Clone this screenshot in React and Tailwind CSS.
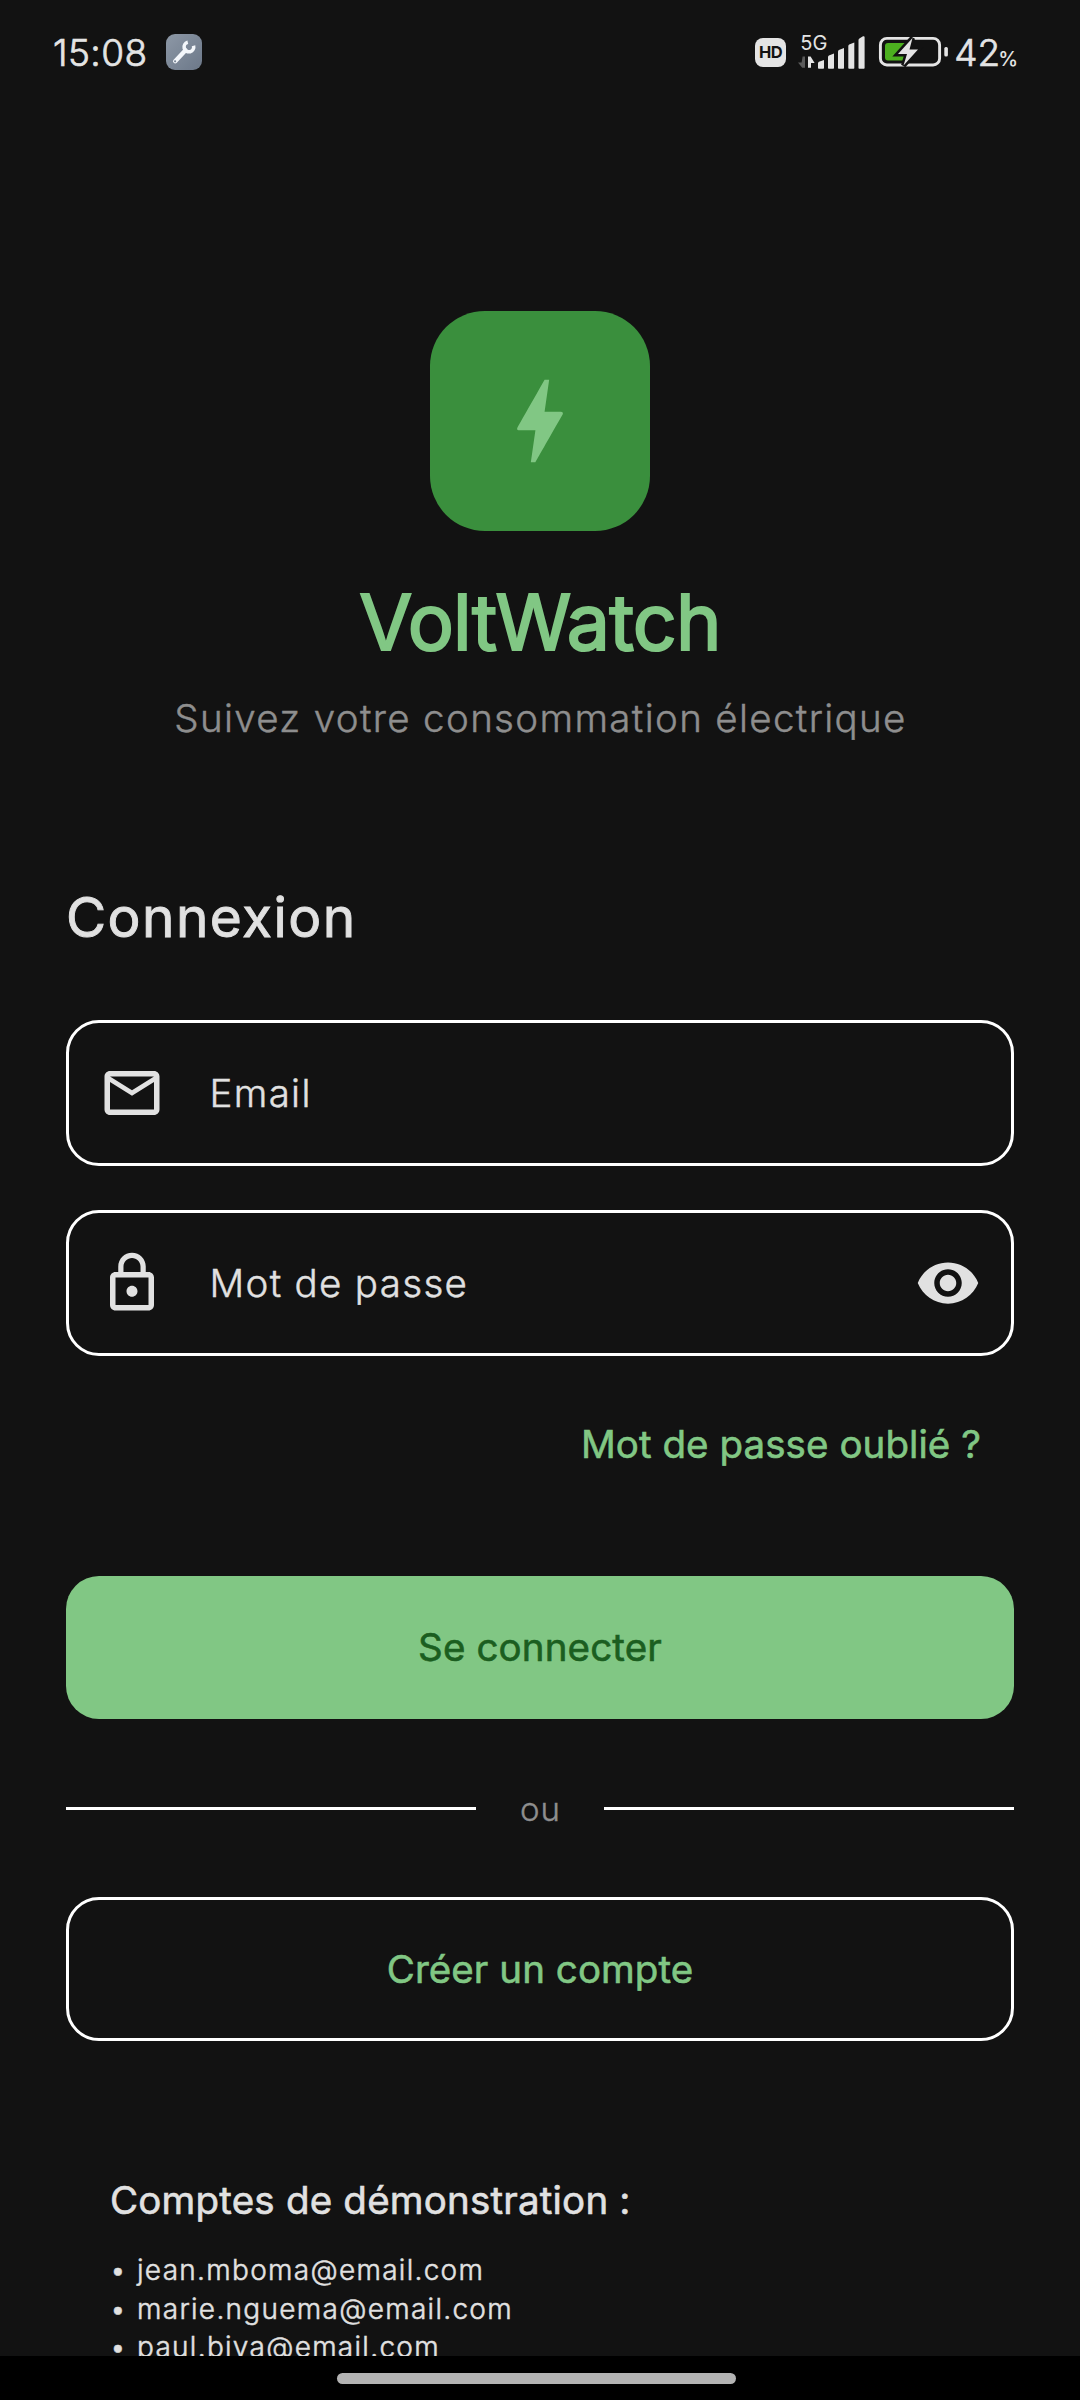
const MAIL =
  "M22 6c0-1.1-.9-2-2-2H4c-1.1 0-2 .9-2 2v12c0 1.1.9 2 2 2h16c1.1 0 2-.9 2-2V6zm-2 0l-8 5-8-5h16zm0 12H4V8l8 5 8-5v10z";
const LOCK =
  "M12 17c1.1 0 2-.9 2-2s-.9-2-2-2-2 .9-2 2 .9 2 2 2zm6-9h-1V6c0-2.76-2.24-5-5-5S7 3.24 7 6v2H6c-1.1 0-2 .9-2 2v10c0 1.1.9 2 2 2h12c1.1 0 2-.9 2-2V10c0-1.1-.9-2-2-2zM8.9 6c0-1.71 1.39-3.1 3.1-3.1s3.1 1.39 3.1 3.1v2H8.9V6zM18 20H6V10h12v10z";
const EYE =
  "M12 4.5C7 4.5 2.73 7.61 1 12c1.73 4.39 6 7.5 11 7.5s9.27-3.11 11-7.5c-1.73-4.39-6-7.5-11-7.5zM12 17c-2.76 0-5-2.24-5-5s2.24-5 5-5 5 2.24 5 5-2.24 5-5 5zm0-8c-1.66 0-3 1.34-3 3s1.34 3 3 3 3-1.34 3-3-1.34-3-3-3z";
const BOLT =
  "M11 21h-1l1-7H7.5c-.58 0-.57-.32-.38-.66.19-.34.05-.08.07-.12C8.48 10.94 10.42 7.54 13 3h1l-1 7h3.5c.49 0 .56.33.47.51l-.07.15C12.96 17.55 11 21 11 21z";

function Icon({ path, className }) {
  return (
    <svg viewBox="0 0 24 24" fill="currentColor" className={className}>
      <path d={path} />
    </svg>
  );
}

function WrenchBadge() {
  return (
    <div className="flex h-9 w-9 items-center justify-center rounded-[9px] bg-linear-to-br from-[#8d98a6] to-[#6c7889]">
      <svg viewBox="0 0 36 36" className="h-9 w-9">
        <path d="M9.2 27.2 L19.5 16.3" stroke="#f4f7fb" strokeWidth="4.4" strokeLinecap="round" />
        <circle
          cx="22.9"
          cy="13"
          r="4.8"
          fill="none"
          stroke="#f4f7fb"
          strokeWidth="3.6"
          strokeDasharray="22.2 8"
          transform="rotate(-15 22.9 13)"
        />
        <circle cx="9.1" cy="27.3" r="1.1" fill="#7b8797" />
      </svg>
    </div>
  );
}

function Signal() {
  return (
    <div className="flex h-[36px] w-[68px] flex-col">
      <span className="h-[15px] pl-[3px] text-[20px] leading-[18px] font-normal tracking-[0.2px]">5G</span>
      <svg viewBox="0 12 68 24" className="-mt-[3px] h-[24px] w-[68px] overflow-visible">
        <g fill="#e4e4e4">
          <path d="M21 34V29.2q0-1 .9-1.5L27 26v8q0 .8-.8.8h-4.4q-.8 0-.8-.8z" />
          <path d="M31 34V23q0-1 .9-1.500L37 19.500V34q0 .8-.8.8h-4.400q-.8 0-.8-.8z" />
          <path d="M41 34V17.500q0-1 .9-1.500L47 14V34q0 .8-.8.8h-4.400q-.8 0-.8-.8z" />
          <path d="M51.300 34V12q0-1 .9-1.500L57.300 8.500V34q0 .8-.8.8h-4.400q-.8 0-.8-.8z" />
          <path d="M61.500 34V6q0-1 .9-1.600L66 2.300q1.600-.5 1.600 1V34q0 .8-.8.8h-4.500q-.8 0-.8-.8z" />
          <path d="M11 22.500h2.600l4 6.500h-3.600v4.800h-3z" />
        </g>
        <path d="M8 22.500v11.300H5.200L1 28.500h3.600l1-6z" fill="#5a5a5a" />
      </svg>
    </div>
  );
}

function Battery() {
  return (
    <svg viewBox="0 0 71 32" className="h-[32px] w-[71px]">
      <rect x="2.400" y="2.400" width="59.200" height="26.600" rx="6.500" fill="none" stroke="#e4e4e4" strokeWidth="2.900" />
      <path d="M10 7h17v17.500H10q-3 0-3-3V10q0-3 3-3z" fill="#4cb01f" />
      <path
        d="M34.500 2L20 18h9l-3.500 11.500L40 13.500h-8.500z"
        fill="#e4e4e4"
        stroke="#121212"
        strokeWidth="5"
        paintOrder="stroke"
      />
      <rect x="66.300" y="11" width="3.600" height="9.500" rx="1.500" fill="#e4e4e4" />
    </svg>
  );
}

function StatusBar() {
  return (
    <header className="flex h-[104px] shrink-0 items-center justify-between pr-[62px] pl-[53px] text-[#e4e4e4]">
      <div className="flex items-center">
        <span className="w-[113px] text-[37px] leading-none font-light tracking-[0.4px] [-webkit-text-stroke:0.7px_#e4e4e4]">
          15:08
        </span>
        <WrenchBadge />
      </div>
      <div className="flex items-center">
        <span className="flex h-[29px] w-[31px] items-center justify-center rounded-[8px] bg-[#e4e4e4] text-[16.5px] leading-none font-bold tracking-[-0.5px] text-[#121212]">
          HD
        </span>
        <div className="ml-[11px]">
          <Signal />
        </div>
        <div className="ml-[13px]">
          <Battery />
        </div>
        <span className="ml-[5px] flex items-baseline leading-none">
          <span className="text-[37px] leading-none font-light [-webkit-text-stroke:0.7px_#e4e4e4]">42</span>
          <span className="-ml-[2px] text-[20px] leading-none font-medium">%</span>
        </span>
      </div>
    </header>
  );
}

function Field({ icon, label, trailing }) {
  return (
    <div className="flex h-[146px] items-center rounded-[33px] border-[3px] border-white px-[30px] text-[#e1e1e1]">
      <Icon path={icon} className="h-[66px] w-[66px]" />
      <span className="ml-[44.5px] flex-1 text-[38.5px] leading-none font-light tracking-[1.32px] [-webkit-text-stroke:0.45px_#e1e1e1]">
        {label}
      </span>
      {trailing && <Icon path={trailing} className="h-[66px] w-[66px]" />}
    </div>
  );
}

const accounts = ["jean.mboma@email.com", "marie.nguema@email.com", "paul.biya@email.com"];

export default function App() {
  return (
    <div className="flex h-[2400px] w-[1080px] flex-col overflow-hidden bg-[#121212] font-['Inter',sans-serif]">
      <StatusBar />
      <main className="flex h-[2252px] shrink-0 flex-col overflow-hidden px-[66px] pt-[207px]">
        <div className="flex h-[220px] w-[220px] shrink-0 items-center justify-center self-center rounded-[55px] bg-[#3a8f3d]">
          <Icon path={BOLT} className="h-[110px] w-[110px] text-[#81c784]" />
        </div>
        <h1 className="mt-[53px] text-center text-[77px] leading-none font-normal tracking-[-0.8px] text-[#81c784] [-webkit-text-stroke:2.1px_#81c784]">
          VoltWatch
        </h1>
        <p className="mt-[37.5px] pl-px text-center text-[38.5px] leading-none font-light tracking-[1.34px] text-[#8e8e8e] [-webkit-text-stroke:0.45px_#8e8e8e]">
          Suivez votre consommation électrique
        </p>
        <h2 className="mt-[152.5px] text-[55px] leading-none font-normal tracking-[1.42px] text-[#e1e1e1] [-webkit-text-stroke:0.9px_#e1e1e1]">
          Connexion
        </h2>

        <div className="mt-[75.5px] flex flex-col gap-[44px]">
          <Field icon={MAIL} label="Email" />
          <Field icon={LOCK} label="Mot de passe" trailing={EYE} />
        </div>

        <a className="mt-[69px] mr-[33px] self-end text-[38.5px] leading-none font-normal tracking-[0.07px] text-[#81c784] [-webkit-text-stroke:0.6px_#81c784]">
          Mot de passe oublié ?
        </a>

        <button className="mt-[112.5px] h-[143px] shrink-0 rounded-[33px] bg-[#81c784] text-[38.5px] leading-none font-normal tracking-[0.14px] text-[#1b5e20] [-webkit-text-stroke:0.6px_#1b5e20]">
          Se connecter
        </button>

        <div className="mt-[73px] flex h-[33px] shrink-0 items-center">
          <span className="h-[3px] w-[410px] bg-white" />
          <span className="flex-1 pt-[2px] pl-[1px] text-center text-[33px] leading-none font-light tracking-[1px] text-[#8e8e8e] [-webkit-text-stroke:0.4px_#8e8e8e]">
            ou
          </span>
          <span className="h-[3px] w-[410px] bg-white" />
        </div>

        <button className="mt-[72px] h-[144px] shrink-0 rounded-[33px] border-[3px] border-white text-[38.5px] leading-none font-normal tracking-[0.06px] text-[#81c784] [-webkit-text-stroke:0.6px_#81c784]">
          Créer un compte
        </button>

        <section className="mt-[139.5px] pl-[44px] text-[#e1e1e1]">
          <h3 className="text-[38.5px] leading-none font-normal tracking-[0.2px] [-webkit-text-stroke:0.6px_#e1e1e1]">
            Comptes de démonstration :
          </h3>
          <ul className="mt-[32px] text-[28px] leading-[38.5px] font-light tracking-[1.29px] [-webkit-text-stroke:0.5px_#e1e1e1]">
            {accounts.map((a) => (
              <li key={a} className="flex">
                <span className="w-[27px]">•</span>
                <span>{a}</span>
              </li>
            ))}
          </ul>
        </section>
      </main>
      <footer className="flex h-[44px] shrink-0 bg-black pt-[17px] pl-[337px]">
        <div className="h-[11px] w-[399px] rounded-full bg-[#b3b3b3]" />
      </footer>
    </div>
  );
}
